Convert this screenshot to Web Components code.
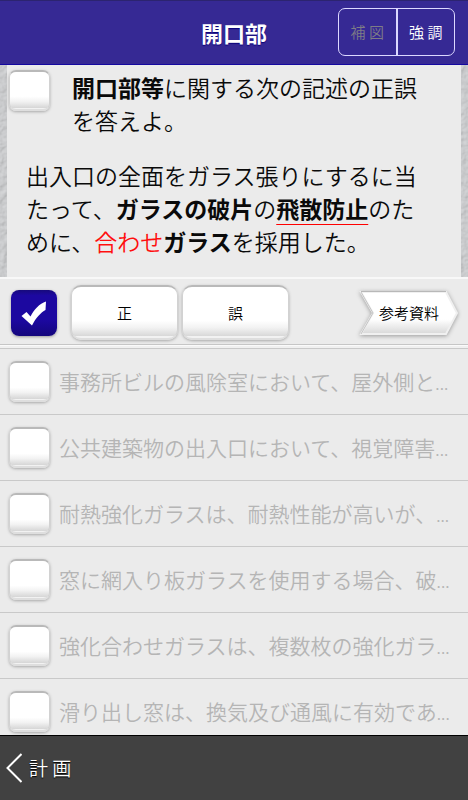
<!DOCTYPE html>
<html lang="ja">
<head>
<meta charset="utf-8">
<meta name="viewport" content="width=device-width, initial-scale=1">
<title>開口部</title>
<style>
  html, body { height: 100%; margin: 0; }
  body {
    font-family: "Noto Sans CJK JP", sans-serif;
    font-weight: 350;
    color: #0a0a0a;
    background: #ebebeb;
  }
  strong { font-weight: 700; }
  .red { color: #ff0f0f; }
  .line { text-decoration: underline 1px #ff0000; text-underline-offset: 6px; text-decoration-skip-ink: none; }
</style>
</head>
<body>
<quiz-page>
  <quiz-header slot="header" heading="開口部"></quiz-header>
  <quiz-question>
    <p slot="lead"><strong>開口部等</strong>に関する次の記述の正誤を答えよ。</p>
    <p slot="body">出入口の全面をガラス張りにするに当たって、<strong>ガラスの破片</strong>の<strong class="line">飛散防止</strong>のために、<span class="red">合わせ</span><strong>ガラス</strong>を採用した。</p>
  </quiz-question>
  <answer-bar></answer-bar>
  <quiz-row>事務所ビルの風除室において、屋外側と</quiz-row>
  <quiz-row>公共建築物の出入口において、視覚障害</quiz-row>
  <quiz-row>耐熱強化ガラスは、耐熱性能が高いが、</quiz-row>
  <quiz-row>窓に網入り板ガラスを使用する場合、破</quiz-row>
  <quiz-row>強化合わせガラスは、複数枚の強化ガラ</quiz-row>
  <quiz-row>滑り出し窓は、換気及び通風に有効であ</quiz-row>
  <quiz-footer slot="footer">計 画</quiz-footer>
</quiz-page>

<script>
  const define = (name, html, setup) => {
    const template = document.createElement('template');
    template.innerHTML = html;
    customElements.define(name, class extends HTMLElement {
      constructor() {
        super();
        this.attachShadow({ mode: 'open' }).append(template.content.cloneNode(true));
      }
      connectedCallback() { if (setup) setup(this); }
    });
  };

  const raised = `
    background: linear-gradient(#fff 0 66%, #f2f2f2 80%, #d8d8d8 96%, #f2f2f2 97%);
    border: 1px solid #d2d2d2;
    border-top: 2px solid #b9b9b9;
    border-bottom: 2px solid #dedede;
    box-shadow: 0 1px 3px #a8a8a8;
  `;

  define('quiz-page', `
    <style>
      :host { display: flex; flex-direction: column; height: 100vh; overflow: hidden; }
      main { flex: 1; min-height: 0; overflow: hidden; background: #c5c6c8; position: relative; }
      .grain { position: absolute; inset: 0; width: 100%; height: 100%; }
      .content { position: relative; }
    </style>
    <slot name="header"></slot>
    <main>
      <svg class="grain" aria-hidden="true">
        <filter id="plaster" x="0" y="0" width="100%" height="100%">
          <feTurbulence type="fractalNoise" baseFrequency="0.16" numOctaves="3" seed="4"/>
          <feDiffuseLighting lighting-color="#cccdcf" surfaceScale="1" diffuseConstant="1.1">
            <feDistantLight azimuth="225" elevation="62"/>
          </feDiffuseLighting>
        </filter>
        <rect width="100%" height="100%" filter="url(#plaster)"/>
      </svg>
      <div class="content"><slot></slot></div>
    </main>
    <slot name="footer"></slot>
  `);

  define('quiz-header', `
    <style>
      :host {
        display: block; background: #362994; color: #fff;
        border-top: 1px solid #2c2470; border-bottom: 1px solid #1408a0;
      }
      header {
        display: grid; grid-template-columns: 1fr auto 1fr; align-items: center;
        padding: 7px 13px 8px;
      }
      h1 {
        grid-column: 2; margin: 0; font-size: 22px; line-height: 32px; font-weight: 700;
        text-shadow: 0 1px 1px #0a0078;
      }
      .group {
        justify-self: end; display: flex; width: 115px; height: 46px;
        border: 1px solid #dcd8ff; border-radius: 7px;
      }
      button {
        flex: 1; padding: 0; border: 0; background: none; color: #fff;
        font: inherit; font-size: 15px; line-height: 24px;
      }
      button + button { border-left: 2px solid #dcd8ff; }
      button:disabled { color: #7e7c86; }
    </style>
    <header>
      <h1></h1>
      <div class="group"><button type="button" disabled>補 図</button><button type="button">強 調</button></div>
    </header>
  `, el => { el.shadowRoot.querySelector('h1').textContent = el.getAttribute('heading'); });

  define('quiz-check', `
    <style>
      :host { display: block; }
      input {
        appearance: none; display: block; box-sizing: border-box;
        width: 41px; height: 41px; margin: 0; border-radius: 7px;
        ${raised}
      }
    </style>
    <input type="checkbox">
  `, el => { el.shadowRoot.querySelector('input').setAttribute('aria-label', el.getAttribute('label') || '選択'); });

  define('quiz-question', `
    <style>
      :host {
        display: block; margin: 0 7px; padding: 5px 0 19px; background: #ebebeb;
        font-size: 23px; line-height: 33px;
      }
      .lead { display: grid; grid-template-columns: 41px 1fr; column-gap: 22px; padding: 0 32px 0 2px; }
      ::slotted(p) { margin: 0; }
      ::slotted([slot="lead"]) { padding-top: 1px; }
      .body { margin: 22px 32px 0 19px; }
    </style>
    <div class="lead">
      <quiz-check label="問題を選択"></quiz-check>
      <slot name="lead"></slot>
    </div>
    <div class="body"><slot name="body"></slot></div>
  `);

  define('answer-bar', `
    <style>
      :host {
        display: flex; align-items: center; gap: 4px; padding: 6px 10px 4px 11px;
        background: #ebebeb; border-top: 2px solid #f8f8f8; border-bottom: 1px solid #c6c6c6;
        margin-bottom: 3px; box-shadow: 0 1px #fafafa, 0 3px #f0f0f0;
      }
      button { font: inherit; font-size: 15px; line-height: 24px; color: #000; padding: 0; }
      .mark { display: grid; width: 46px; height: 46px; margin-right: 10px; }
      .mark input, .mark svg { grid-area: 1 / 1; }
      .mark input {
        appearance: none; margin: 0; border-radius: 8px;
        background: linear-gradient(#170a7c, #1c08a0 12% 65%, #14067c);
        box-shadow: 0 1px 3px #999;
      }
      .mark svg { place-self: center; pointer-events: none; }
      .choice { width: 107px; height: 55px; border-radius: 10px; ${raised} }
      .ref { margin-left: auto; display: grid; place-items: center; border: 0; background: none; }
      .ref svg, .ref span { grid-area: 1 / 1; }
      .ref svg { overflow: visible; filter: drop-shadow(0 1px 2px #999); }
      .ref span { z-index: 1; }
    </style>
    <label class="mark">
      <input type="checkbox" checked aria-label="チェック">
      <svg width="28" height="28" viewBox="0 0 28 28" aria-hidden="true">
        <path d="M1.500 17 6.500 13 10.500 17.500C14 10.500 19.500 4.500 26 2.500L25.500 11C21 13.500 16 18.500 12 26.500Z" fill="#fff"/>
      </svg>
    </label>
    <button class="choice" type="button">正</button>
    <button class="choice" type="button">誤</button>
    <button class="ref" type="button">
      <svg width="98" height="44" viewBox="0 0 98 44" aria-hidden="true">
        <defs><linearGradient id="g" x1="0" y1="0" x2="0" y2="1">
          <stop offset="0" stop-color="#fff"/><stop offset=".65" stop-color="#fff"/><stop offset="1" stop-color="#d8d8d8"/>
        </linearGradient></defs>
        <path d="M1 1H86L97 22 86 43H1L13 22Z" fill="url(#g)" stroke="#f0f0f0" stroke-width="2"/>
        <path d="M1 .5H86" stroke="#b8b8b8"/>
        <path d="M1 1 13 22 1 43" fill="none" stroke="#c4c4c4"/>
      </svg>
      <span>参考資料</span>
    </button>
  `);

  define('quiz-row', `
    <style>
      :host { display: block; background: #ebebeb; border-top: 1px solid #c9c9c9; }
      div {
        display: flex; align-items: center; gap: 9px; height: 65px; padding-left: 9px;
        color: #b5b5b5; font-size: 21px; line-height: 32px; white-space: nowrap; overflow: hidden;
      }
      quiz-check { flex: none; }
      i { font-style: normal; font-size: 16px; }
    </style>
    <div><quiz-check></quiz-check><span><slot></slot><i>...</i></span></div>
  `, el => { el.shadowRoot.querySelector('quiz-check').setAttribute('label', el.textContent); });

  define('quiz-footer', `
    <style>
      :host { display: block; background: #414141; border-top: 1px solid #000; color: #fff; }
      a {
        display: inline-flex; align-items: center; gap: 7px; height: 64px; padding-left: 6px;
        color: inherit; text-decoration: none; font-size: 19px; line-height: 28px;
        text-shadow: 0 1px 1px #000;
      }
    </style>
    <footer>
      <a href="#top">
        <svg width="16" height="30" viewBox="0 0 16 30" fill="none" stroke="#fff" stroke-width="2" aria-hidden="true"><path d="M15.500 1 1.500 15 15.500 29"/></svg>
        <slot></slot>
      </a>
    </footer>
  `);
</script>
</body>
</html>
